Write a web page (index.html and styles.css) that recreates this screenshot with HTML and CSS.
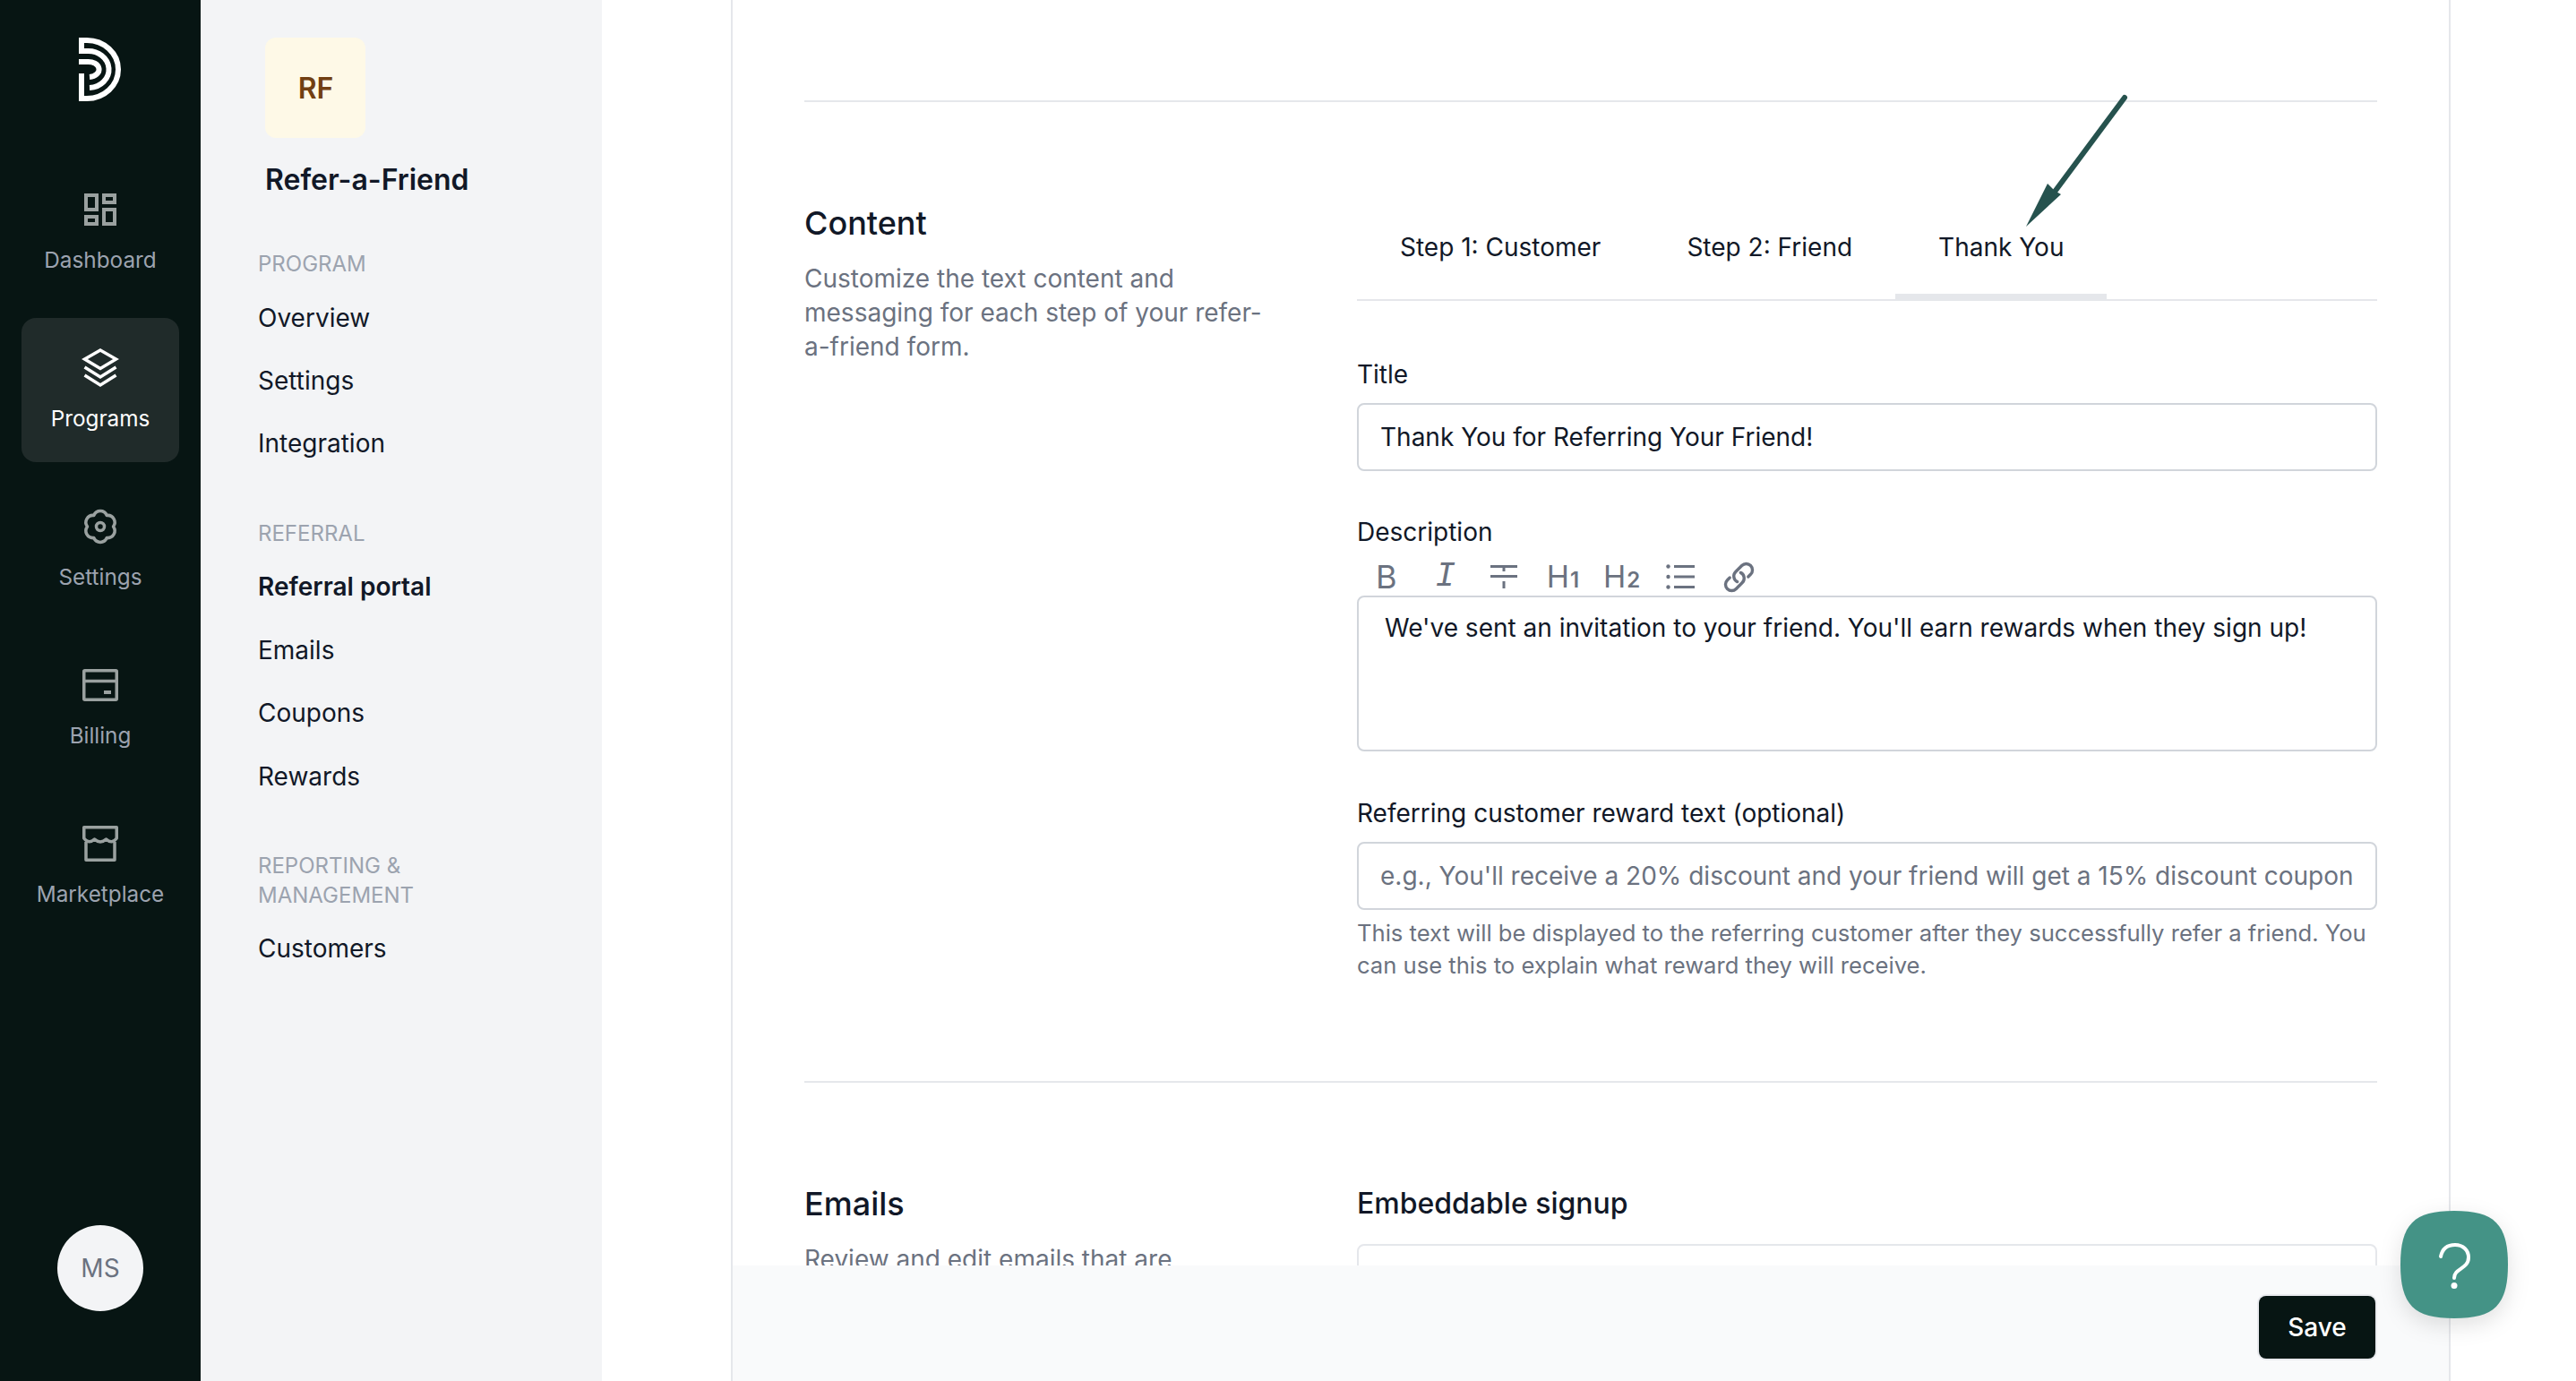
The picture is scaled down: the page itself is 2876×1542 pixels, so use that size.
FILE: index.html
```html
<!DOCTYPE html>
<html lang="en">
<head>
<meta charset="utf-8">
<title>Refer-a-Friend</title>
<link rel="stylesheet" href="styles.css">
</head>
<body>
<div class="app">
  <aside class="rail">
    <svg class="logo" viewBox="88 42 48 72" width="48" height="72" fill="none" stroke="#fff" stroke-width="6">
      <path d="M88 45H97A35 32.5 0 0 1 97 110H91V82"/>
      <path d="M91 42V60M88 57H97A23 20.5 0 0 1 100 98"/>
      <path d="M88 69H97A12 8.5 0 0 1 100 86"/>
    </svg>
    <nav class="rail-nav">
      <a class="rail-item">
        <svg class="rail-icon" viewBox="0 0 44 44" fill="none" stroke="currentColor" stroke-width="4">
          <rect x="6" y="6" width="12" height="16"/><rect x="26" y="6" width="12" height="8"/>
          <rect x="6" y="30" width="12" height="8"/><rect x="26" y="22" width="12" height="16"/>
        </svg>
        <span>Dashboard</span>
      </a>
      <a class="rail-item is-active">
        <svg class="rail-icon" viewBox="0 0 44 44" fill="none" stroke="currentColor" stroke-width="3.5">
          <path d="M22 2L39.5 12L22 22.5L4.500 12Z"/><path d="M4.500 21L22 32L39.500 21"/><path d="M4.500 30L22 41L39.500 30"/>
        </svg>
        <span>Programs</span>
      </a>
      <a class="rail-item">
        <svg class="rail-icon" viewBox="-2 -2 44 44" fill="none" stroke="currentColor" stroke-width="3.500" stroke-linejoin="round">
          <path d="M12.750 7.440C15.610 1 24.390 1 27.250 7.440C34.260 6.700 38.650 14.300 34.500 20C38.650 25.700 34.260 33.300 27.250 32.560C24.390 39 15.610 39 12.750 32.560C5.740 33.300 1.350 25.700 5.500 20C1.350 14.300 5.740 6.700 12.750 7.440Z"/>
          <circle cx="20" cy="20" r="4.500"/>
        </svg>
        <span>Settings</span>
      </a>
      <a class="rail-item">
        <svg class="rail-icon" viewBox="0 0 44 44" fill="none" stroke="currentColor" stroke-width="3.500">
          <rect x="3.750" y="5.750" width="36.500" height="32.500" rx="1"/><path d="M3.750 17.500H40.250"/>
          <rect class="fill-icon" x="26" y="28" width="8" height="4"/>
        </svg>
        <span>Billing</span>
      </a>
      <a class="rail-item">
        <svg class="rail-icon" viewBox="0 0 44 44" fill="none" stroke="currentColor" stroke-width="3.500" stroke-linejoin="round">
          <path d="M3.750 16Q9 23 15.500 17Q22 23 28.500 17Q35 23 40.250 16V3.750H3.750Z"/><path d="M6 20V40.250H38V20"/>
        </svg>
        <span>Marketplace</span>
      </a>
    </nav>
    <div class="avatar">MS</div>
  </aside>

  <aside class="subnav">
    <div class="tile">RF</div>
    <h2 class="program-name">Refer-a-Friend</h2>
    <div class="group-label">PROGRAM</div>
    <a class="sub-item">Overview</a>
    <a class="sub-item">Settings</a>
    <a class="sub-item">Integration</a>
    <div class="group-label spaced">REFERRAL</div>
    <a class="sub-item is-current">Referral portal</a>
    <a class="sub-item">Emails</a>
    <a class="sub-item">Coupons</a>
    <a class="sub-item">Rewards</a>
    <div class="group-label spaced">REPORTING &amp;<br>MANAGEMENT</div>
    <a class="sub-item">Customers</a>
  </aside>

  <main class="main">
    <div class="card">
      <div class="scroller">
        <section class="section has-rule">
          <div class="section-intro">
            <h3>Content</h3>
            <p>Customize the text content and messaging for each step of your refer-a-friend form.</p>
          </div>
          <div class="section-body">
            <div class="tabs">
              <a class="tab">Step 1: Customer</a>
              <a class="tab">Step 2: Friend</a>
              <a class="tab is-active">Thank You</a>
            </div>
            <label class="field-label first">Title</label>
            <div class="input">Thank You for Referring Your Friend!</div>
            <label class="field-label">Description</label>
            <div class="toolbar">
              <span class="tool tool-b">B</span>
              <span class="tool tool-i">I</span>
              <span class="tool">
                <svg viewBox="0 0 32 28" width="32" height="28" fill="none" stroke="currentColor" stroke-width="3"><path d="M1 2.500H31M16 3V8M1 13.500H31M16 19V27" /></svg>
              </span>
              <span class="tool tool-h">H<small>1</small></span>
              <span class="tool tool-h">H<small>2</small></span>
              <span class="tool">
                <svg viewBox="0 0 32 28" width="32" height="28" fill="none" stroke="currentColor" stroke-width="3"><path d="M9 2.500H32M9 14H32M9 25.500H32"/><g class="fill-icon"><circle cx="2.500" cy="2.500" r="2.200"/><circle cx="2.500" cy="14" r="2.200"/><circle cx="2.500" cy="25.500" r="2.200"/></g></svg>
              </span>
              <span class="tool">
                <svg viewBox="0 0 24 24" width="37" height="37" fill="none" stroke="currentColor" stroke-width="2.200" stroke-linecap="round" stroke-linejoin="round"><path d="M13.190 8.688a4.500 4.500 0 0 1 1.242 7.244l-4.500 4.500a4.500 4.500 0 0 1-6.364-6.364l1.757-1.757m13.350-.622 1.757-1.757a4.500 4.500 0 0 0-6.364-6.364l-4.500 4.500a4.500 4.500 0 0 0 1.242 7.244"/></svg>
              </span>
            </div>
            <div class="editor">We've sent an invitation to your friend. You'll earn rewards when they sign up!</div>
            <label class="field-label after-editor">Referring customer reward text (optional)</label>
            <div class="input placeholder">e.g., You'll receive a 20% discount and your friend will get a 15% discount coupon</div>
            <p class="hint">This text will be displayed to the referring customer after they successfully refer a friend. You can use this to explain what reward they will receive.</p>
          </div>
        </section>
        <section class="section">
          <div class="section-intro">
            <h3>Emails</h3>
            <p>Review and edit emails that are automatically sent to your customers.</p>
          </div>
          <div class="section-body">
            <h4 class="sub-heading">Embeddable signup</h4>
            <div class="embed-box"></div>
          </div>
        </section>
      </div>
      <footer class="footer"><button class="save">Save</button></footer>
    </div>
  </main>

  <svg class="arrow" viewBox="0 0 124 156" width="124" height="156">
    <path class="arrow-line" d="M114 7L36 112"/>
    <path class="arrow-head" d="M4 151L28 103L36 111L43 115Z"/>
  </svg>

  <button class="help" aria-label="Help">
    <svg viewBox="0 0 120 120" width="120" height="120">
      <path class="help-bg" d="M60 0C105 0 120 15 120 60C120 105 105 120 60 120C15 120 0 105 0 60C0 15 15 0 60 0Z"/>
      <path class="help-mark" d="M45 51C47 41 54 38 61 38C70 38 76 44 76 52C76 65 60 64 60 75"/>
      <circle class="help-dot" cx="60" cy="83.500" r="3.500"/>
    </svg>
  </button>
</div>
</body>
</html>
```

FILE: styles.css
```css
* { box-sizing: border-box; }
html, body { margin: 0; height: 100%; }
body {
  font-family: Inter, "Liberation Sans", sans-serif;
  color: #111827;
  background: #fff;
  overflow: hidden;
}
.app { position: relative; display: flex; height: 100vh; overflow: hidden; }

/* Icon rail */
.rail {
  flex: 0 0 224px;
  background: #071513;
  display: flex;
  flex-direction: column;
  align-items: center;
}
.logo { display: block; margin-top: 42px; }
.rail-nav { display: flex; flex-direction: column; gap: 16px; margin-top: 64px; }
.rail-item {
  width: 176px;
  height: 161px;
  padding-top: 34px;
  border-radius: 16px;
  display: flex;
  flex-direction: column;
  align-items: center;
  color: #9ca3af;
  font-size: 24.300px;
  line-height: 32px;
}
.rail-icon { width: 44px; height: 44px; color: #9aa1a0; margin-bottom: 18px; display: block; }
.fill-icon { fill: currentColor; stroke: none; }
.rail-item.is-active { background: #202b2a; color: #fff; }
.rail-item.is-active .rail-icon { color: #fff; }
.avatar {
  margin-top: auto;
  margin-bottom: 78px;
  width: 96px;
  height: 96px;
  border-radius: 50%;
  background: #f3f4f6;
  color: #6b7280;
  font-size: 28px;
  display: flex;
  align-items: center;
  justify-content: center;
}

/* Secondary nav */
.subnav {
  flex: 0 0 448px;
  background: #f3f4f6;
  padding: 42px 24px 0 64px;
}
.tile {
  margin-left: 8px;
  width: 112px;
  height: 112px;
  padding-left: 1px;
  border-radius: 12px;
  background: #fef9e7;
  color: #713f12;
  font-size: 32px;
  font-weight: 600;
  display: flex;
  align-items: center;
  justify-content: center;
}
.program-name {
  margin: 25px 0 0 8px;
  font-size: 32px;
  line-height: 44px;
  font-weight: 600;
  color: #111827;
}
.group-label {
  margin-top: 55px;
  font-size: 24px;
  line-height: 33px;
  color: #9ca3af;
}
.group-label.spaced { margin-top: 48px; }
.sub-item {
  display: flex;
  align-items: center;
  height: 70.400px;
  font-size: 28px;
  color: #111827;
}
.group-label + .sub-item { margin-top: 8.500px; }
.sub-item.is-current { font-weight: 600; }

/* Main */
.main { flex: 1; min-width: 0; padding: 0 140px 0 144px; background: #fff; }
.card {
  height: 100%;
  border-left: 2px solid #e5e7eb;
  border-right: 2px solid #e5e7eb;
  display: flex;
  flex-direction: column;
}
.scroller { flex: 1; min-height: 0; overflow: hidden; padding: 112px 80px 0; }
.section {
  display: grid;
  grid-template-columns: 521px minmax(0, 1fr);
  column-gap: 96px;
  border-top: 2px solid #e5e7eb;
  padding-top: 115px;
  padding-bottom: 111px;
}
.section-intro h3 { margin: 0; font-size: 36px; line-height: 40px; font-weight: 500; color: #111827; }
.section-intro p { margin: 23px 0 0; font-size: 28px; line-height: 38px; color: #6b7280; }

.tabs {
  display: flex;
  height: 107px;
  align-items: stretch;
  border-bottom: 2px solid #e5e7eb;
}
.tab {
  padding: 27px 48px 0;
  font-size: 28px;
  line-height: 40px;
  color: #111827;
  margin-bottom: -2px;
  height: 107px;
}
.tab.is-active { border-bottom: 8px solid #e5e7eb; }

.field-label { display: block; margin-top: 48px; font-size: 28px; line-height: 40px; color: #111827; }
.field-label.first { margin-top: 62px; }
.field-label.after-editor { margin-top: 49px; }
.input {
  margin-top: 12px;
  height: 76px;
  border: 2px solid #d1d5db;
  border-radius: 8px;
  padding: 0 24px;
  display: flex;
  align-items: center;
  font-size: 28px;
  white-space: nowrap;
  color: #111827;
}
.input.placeholder { color: #6b7280; }
.toolbar { display: flex; height: 51px; align-items: flex-end; padding-bottom: 2px; color: #6b7280; }
.tool { width: 65.700px; height: 38px; display: flex; align-items: center; justify-content: center; font-size: 34px; line-height: 38px; flex: none; }
.tool-b { font-size: 36px; }
.tool-i { font-family: "Liberation Mono", monospace; font-style: italic; font-size: 38px; }
.tool-h { font-size: 34px; align-items: baseline; }
.tool-h small { font-size: 24px; font-weight: 600; margin-left: 1px; }
.editor {
  height: 174px;
  border: 2px solid #d1d5db;
  border-radius: 8px;
  padding: 14px 29px;
  font-size: 28px;
  line-height: 40px;
}
.hint { margin: 8px 0 0; font-size: 25.600px; line-height: 36px; color: #6b7280; }
.sub-heading { margin: 0; font-size: 32px; line-height: 40px; font-weight: 500; color: #111827; }
.embed-box { margin-top: 25px; height: 300px; border: 2px solid #e5e7eb; border-radius: 8px; }

.footer {
  flex: 0 0 129px;
  background: #f9fafb;
  display: flex;
  justify-content: flex-end;
  align-items: flex-start;
  padding: 34px 82px 0 0;
}
.save {
  width: 130px;
  height: 70px;
  border: 0;
  border-radius: 8px;
  background: #071513;
  color: #fff;
  font-family: inherit;
  font-size: 28px;
  font-weight: 500;
  box-shadow: 0 0 0 2px #e9eaee;
}

/* Overlays */
.arrow { position: absolute; left: 2258px; top: 102px; }
.arrow-line { fill: none; stroke: #26524e; stroke-width: 6; stroke-linecap: round; }
.arrow-head { fill: #26524e; }
.help {
  position: absolute;
  left: 2680px;
  top: 1352px;
  width: 120px;
  height: 120px;
  padding: 0;
  border: 0;
  background: none;
  filter: drop-shadow(0 8px 12px rgba(0, 0, 0, .12));
}
.help svg { display: block; }
.help-bg { fill: #449386; }
.help-mark { fill: none; stroke: #fff; stroke-width: 4; stroke-linecap: round; }
.help-dot { fill: #fff; }
```
